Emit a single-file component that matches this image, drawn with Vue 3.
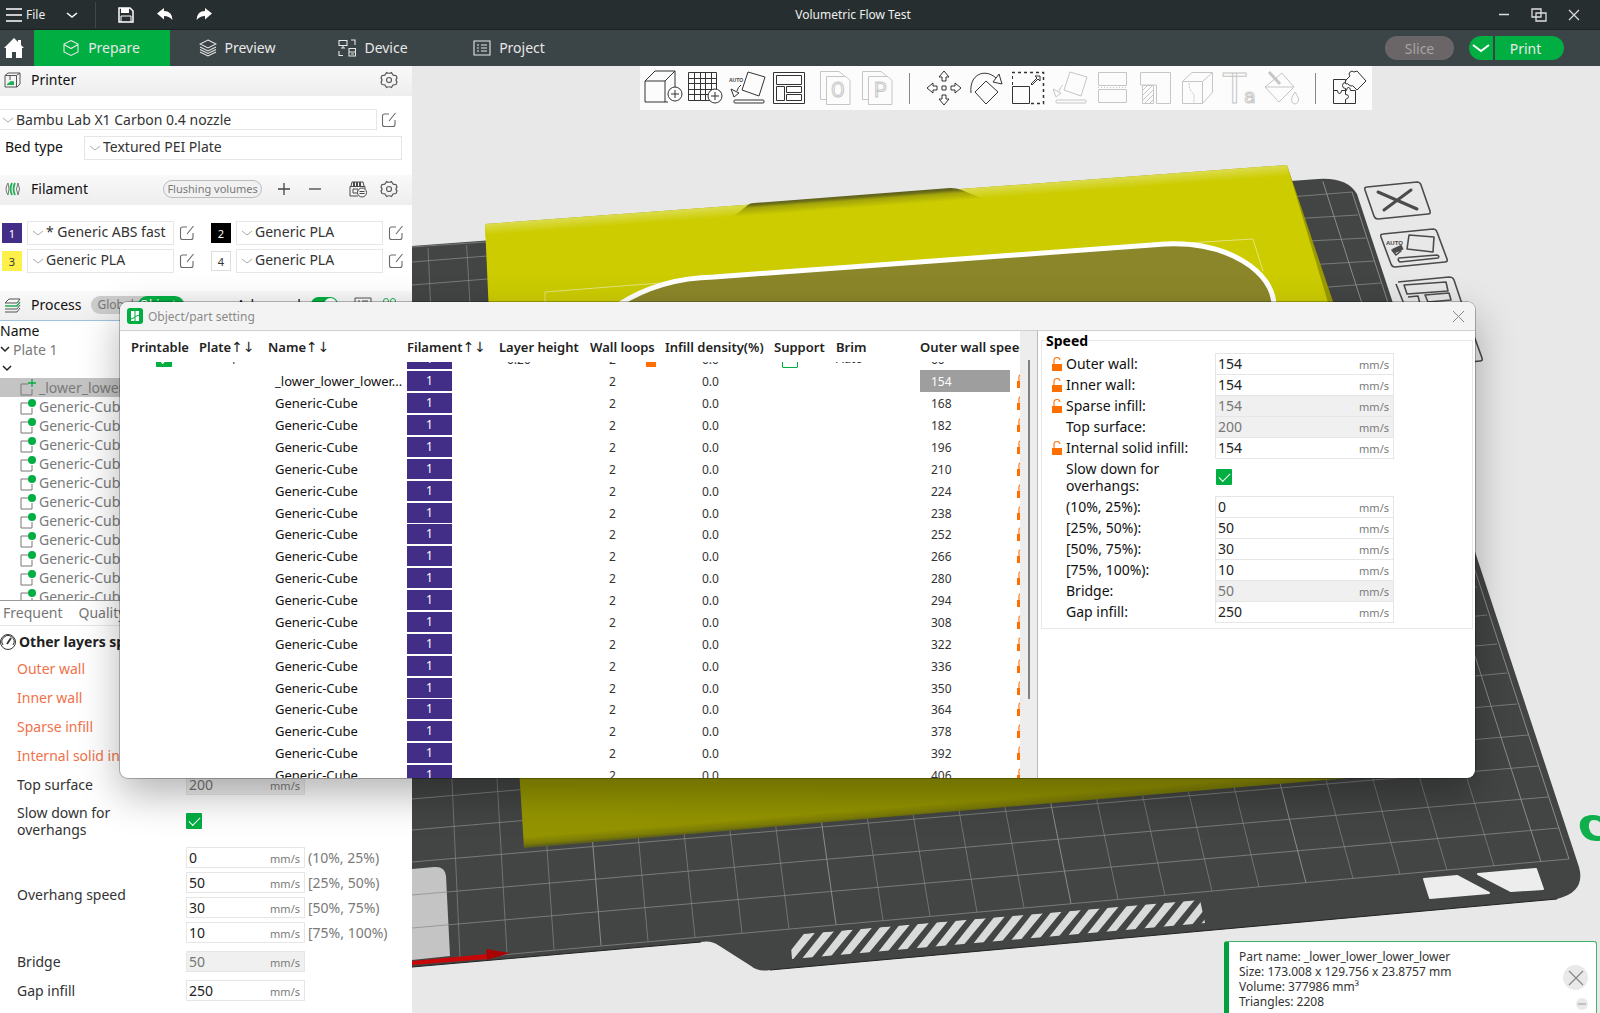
<script setup>
import { ref, onMounted } from 'vue'

const tabs = [
  { name: 'Prepare', icon: 'cube' },
  { name: 'Preview', icon: 'layers' },
  { name: 'Device', icon: 'device' },
  { name: 'Project', icon: 'project' },
]

const filaments = [
  { id: 1, name: '* Generic ABS fast', bg: '#432e87', fg: '#ffffff' },
  { id: 2, name: 'Generic PLA', bg: '#000000', fg: '#ffffff' },
  { id: 3, name: 'Generic PLA', bg: '#fdf04a', fg: '#333333' },
  { id: 4, name: 'Generic PLA', bg: '#ffffff', fg: '#333333' },
]

const treeParts = Array.from({ length: 11 }, (_, i) => i)

const changed = ['Outer wall', 'Inner wall', 'Sparse infill', 'Internal solid infill']
const overhangs = [
  { range: '(10%, 25%)', value: 0 },
  { range: '[25%, 50%)', value: 50 },
  { range: '[50%, 75%)', value: 30 },
  { range: '[75%, 100%)', value: 10 },
]

const rows = Array.from({ length: 19 }, (_, i) => ({
  name: i === 0 ? '_lower_lower_lower...' : 'Generic-Cube',
  speed: 154 + 14 * i,
  selected: i === 0,
}))

const panelTop = [
  { label: 'Outer wall:', value: 154, lock: true },
  { label: 'Inner wall:', value: 154, lock: true },
  { label: 'Sparse infill:', value: 154, lock: true, off: true },
  { label: 'Top surface:', value: 200, off: true },
  { label: 'Internal solid infill:', value: 154, lock: true },
]
const panelBottom = [
  { label: '(10%, 25%):', value: 0 },
  { label: '[25%, 50%):', value: 50 },
  { label: '[50%, 75%):', value: 30 },
  { label: '[75%, 100%):', value: 10 },
  { label: 'Bridge:', value: 50, off: true },
  { label: 'Gap infill:', value: 250 },
]

// Bed grid in scene coordinates: columns lean more the further right they are.
const columns = Array.from({ length: 24 }, (_, i) => {
  const x = 460 + 47 * i
  const y = 958 - (x - 460) * 0.089
  const lean = 0.045 + (x - 460) * 0.000255
  const end = 249 - (x - lean * (y - 210) - 412) * 0.0735
  return { x1: x, y1: y, x2: x - lean * (y - end), y2: end, major: i % 5 === 3 }
})
const lines = [
  [412, 963, 1569, 859], [412, 928, 1559, 828], [412, 895, 1548, 797], [412, 862, 1538, 766],
  [412, 830, 1528, 735], [412, 799, 1517, 704], [1400, 683, 1507, 673], [1400, 653, 1497, 644],
  [1400, 624, 1487, 615], [1400, 595, 1477, 587],
  [412, 247, 500, 241], [412, 262, 500, 255], [412, 285, 500, 278],
  [1290, 197, 1352, 192], [1290, 219, 1358, 215], [1290, 242, 1366, 238],
  [1290, 266, 1374, 261], [1290, 290, 1381, 283],
]
const stripes = Array.from({ length: 23 }, (_, k) => {
  const top = 804 + 19 * k
  const bot = 782 + 19 * k
  const ty = 935 - (top - 790) * 0.087
  const by = 961 - (bot - 790) * 0.087
  return `${top},${ty} ${top + 11},${ty - 1} ${bot + 10},${by - 1} ${bot},${by}`
})

const scroller = ref(null)
onMounted(() => { scroller.value.scrollTop = 14 })
</script>

<template>
  <svg class="defs" aria-hidden="true">
    <symbol id="chev" viewBox="0 0 12 8"><path d="M1 2l5 4 5-4" fill="none" stroke="currentColor" stroke-width="1" /></symbol>
    <symbol id="edit" viewBox="0 0 16 16"><path d="M8 2H3.500Q1.500 2 1.500 4v8.500q0 2 2 2H12q2 0 2-2V8M14.500 1L8 9" fill="none" stroke="#6b6b6b" stroke-width="1.100" /></symbol>
    <symbol id="gear" viewBox="0 0 18 18"><path d="M6.500 1.500q2.500 1.500 5 0l1.500 2.500q.500 .500 3 .500l1 2.500q-2 2 0 4l-1 2.500q-2.500 0-3 .500l-1.500 2.500q-2.500-1.500-5 0L5 14q-.500-.500-3-.500L1 11q2-2 0-4l1-2.500q2.500 0 3-.500z" fill="none" stroke="#5a5a5a" stroke-width="1.200" stroke-linejoin="round" /><circle cx="9" cy="9" r="2.500" fill="none" stroke="#5a5a5a" stroke-width="1.200" /></symbol>
    <symbol id="lock" viewBox="0 0 10 14"><path d="M2 7V4a3 3 0 0 1 6-1" fill="none" stroke="#ff7a1a" stroke-width="1.200" /><rect y="7" width="10" height="7" fill="#ff6f00" /></symbol>
    <symbol id="lay" viewBox="0 0 42 44"><path d="M21 6l17 5-6 19-17-6zM4 23l8 4-5 4zM10 25q1-4 4-6" fill="none" stroke="currentColor" /><rect x="7" y="34" width="30" height="3" rx="1" fill="none" stroke="currentColor" /></symbol>
  </svg>

  <div class="app">
    <header class="titlebar">
      <div class="menu">
        <button class="file"><svg width="16" height="14"><path d="M0 1h16M0 7h16M0 13h16" stroke="#fff" stroke-width="1.300" /></svg>File</button>
        <button aria-label="Menu" class="drop"><svg width="12" height="8"><path d="M1 2l5 4 5-4" fill="none" stroke="#fff" stroke-width="1.500" /></svg></button>
        <button aria-label="Save" class="save"><svg width="16" height="16"><path d="M1 1h11l3 3v11H1z" fill="none" stroke="#fff" stroke-width="1.500" /><path d="M3 1h8v5H3z" fill="#fff" /><path d="M3 9h10M3 15V9M13 15V9" stroke="#fff" fill="none" /></svg></button>
        <button aria-label="Undo" class="undo"><svg width="16" height="14"><path d="M0 5.500L7 0v3q8 0 8.500 9Q12 8 7 8v3.500z" fill="#fff" /></svg></button>
        <button aria-label="Redo"><svg width="16" height="14"><path d="M16 5.500L9 0v3Q1 3 .5 12 4 8 9 8v3.500z" fill="#fff" /></svg></button>
      </div>
      <div class="title">Volumetric Flow Test</div>
      <div class="winbtns">
        <button aria-label="Minimize"><svg width="12" height="14"><path d="M1 6.500h10" stroke="#ddd" stroke-width="1.500" /></svg></button>
        <button aria-label="Restore"><svg width="16" height="14"><path d="M1 1h9v8H1zM5 5h10v8H5z" fill="none" stroke="#ddd" stroke-width="1.300" /></svg></button>
        <button aria-label="Close"><svg width="12" height="12"><path d="M1 1l10 10M11 1L1 11" stroke="#ddd" stroke-width="1.200" /></svg></button>
      </div>
    </header>

    <nav class="tabbar">
      <button class="home" aria-label="Home"><svg width="20" height="20"><path d="M10 0L0 10h2v10h6v-6h4v6h6V10h2l-3-3V2h-3v2z" fill="#fff" /></svg></button>
      <button v-for="(t, i) in tabs" :key="t.name" class="tab" :class="{ active: i === 0 }">
        <svg width="18" height="18" fill="none" stroke="#e8e8e8" stroke-width="1.100">
          <path v-if="t.icon === 'cube'" d="M9 1.500l7 3.500v8l-7 3.500L2 13V5zM2 5.500l7 4 7-4" />
          <path v-else-if="t.icon === 'layers'" d="M9 1l8 4-8 4-8-4zM1 8l8 4 8-4M1 10.500l8 4 8-4M1 13l8 4 8-4" />
          <path v-else-if="t.icon === 'device'" d="M1 1.500h8v5H1zM3 9h4M5 7v2M13 1h4v5M1 12v4.500h4M11 9.500h6.500V17H11zM11 13h6M13 15h3" />
          <path v-else d="M1 2h16v14H1zM4 6h2M8 6h6M4 9h2M8 9h6M4 12h2M8 12h6" />
        </svg>
        {{ t.name }}
      </button>
      <div class="actions">
        <button class="slice" disabled>Slice</button>
        <div class="print">
          <button class="pdrop" aria-label="Print options"><svg width="18" height="10"><path d="M1 2l8 6 8-6" fill="none" stroke="#fff" stroke-width="2" /></svg></button>
          <button class="pgo">Print</button>
        </div>
      </div>
    </nav>

    <main class="body">
      <aside class="side">
        <div class="sec">
          <svg class="secicon" width="18" height="16"><path d="M1 3.500L4 1h12v11l-3 3H1zM1 3.500h11.500V15M12.500 3.500L16 1" fill="none" stroke="#555" /><path d="M3 12l4-3 3 .5V13H3z" fill="#1faf54" /><path d="M6 4v4" stroke="#555" /></svg>
          <h2>Printer</h2>
          <svg class="gear" width="18" height="18"><use href="#gear" /></svg>
        </div>
        <div class="printer">
          <div class="line">
            <div class="combo wide"><svg width="12" height="8"><use href="#chev" /></svg><select aria-label="Printer"><option>Bambu Lab X1 Carbon 0.4 nozzle</option></select></div>
            <button class="edit" aria-label="Edit printer"><svg width="16" height="16"><use href="#edit" /></svg></button>
          </div>
          <div class="line bed">
            <label for="bed">Bed type</label>
            <div class="combo tall"><svg width="12" height="8"><use href="#chev" /></svg><select id="bed"><option>Textured PEI Plate</option></select></div>
          </div>
        </div>

        <div class="sec">
          <svg class="secicon" width="18" height="16" fill="none"><path d="M4 2q-4 6 0 12M4 2q2 6 0 12" stroke="#777" /><path d="M8 2q-3 6 0 12M11 2q-3 6 0 12" stroke="#1faf54" stroke-width="1.800" /><path d="M14 2q-3 6 0 12q3-6 0-12" stroke="#777" /></svg>
          <h2>Filament</h2>
          <button class="flush">Flushing volumes</button>
          <button class="pm" aria-label="Add filament"><svg width="12" height="12"><path d="M0 6h12M6 0v12" stroke="#444" stroke-width="1.300" /></svg></button>
          <button class="pm" aria-label="Remove filament"><svg width="12" height="12"><path d="M0 6h12" stroke="#444" stroke-width="1.300" /></svg></button>
          <button class="ams" aria-label="Sync filaments"><svg width="18" height="17" fill="none" stroke="#4a4a4a"><path d="M2 5l1-4h11l1 4M1 5.500h15v3M1 5.500V15h8M4 8h5v4H4z" /><path d="M5 1v4M8 1v4M11 1v4" stroke-width="2" /><circle cx="13" cy="11.500" r="4.500" fill="#f4f4f4" /><path d="M10.500 10.500h5M10.500 12.500h5" /></svg></button>
          <svg class="gear" width="18" height="18"><use href="#gear" /></svg>
        </div>
        <div class="fils">
          <div v-for="f in filaments" :key="f.id" class="fil">
            <span class="badge" :class="{ outlined: f.id === 4 }" :style="{ background: f.bg, color: f.fg }">{{ f.id }}</span>
            <div class="combo tall"><svg width="12" height="8"><use href="#chev" /></svg><select :aria-label="'Filament ' + f.id"><option>{{ f.name }}</option></select></div>
            <button class="edit" :aria-label="'Edit filament ' + f.id"><svg width="16" height="16"><use href="#edit" /></svg></button>
          </div>
        </div>

        <div class="sec process">
          <svg class="secicon" width="18" height="16" fill="none"><path d="M5 2h11l-3 4H1z" stroke="#555" /><path d="M1 9h12l3-4" stroke="#1faf54" stroke-width="1.500" /><path d="M1 12h12l3-4M1 15h12l3-4" stroke="#555" /></svg>
          <h2>Process</h2>
          <div class="scope"><button>Global</button><button class="on">Objects</button></div>
          <label class="adv" for="advanced">Advanced</label>
          <input id="advanced" type="checkbox" class="switch" checked />
          <svg width="18" height="16" class="cmp"><path d="M1 1h16v12H1zM4 4h2M8 4h6M4 7h2M8 7h6" fill="none" stroke="#555" /></svg>
          <svg width="16" height="16" class="gg"><circle cx="4" cy="4" r="2.500" fill="none" stroke="#1faf54" /><circle cx="11" cy="4" r="2.500" fill="none" stroke="#1faf54" /></svg>
        </div>

        <div class="tree">
          <div class="node head">Name</div>
          <div class="node plate"><svg width="10" height="7"><path d="M1 1l4 4 4-4" fill="none" stroke="#222" stroke-width="1.500" /></svg>Plate 1</div>
          <div class="node obj"><svg width="10" height="7"><path d="M1 1l4 4 4-4" fill="none" stroke="#222" stroke-width="1.500" /></svg></div>
          <div class="node part sel"><svg width="16" height="18"><path d="M8 5H1v11h11v-6" fill="none" stroke="#777" /><path d="M12 0v8M8 4h8" stroke="#00ae42" stroke-width="1.300" /></svg>_lower_lower_</div>
          <div v-for="n in treeParts" :key="n" class="node part"><svg width="16" height="18"><path d="M8 5H1v11h11v-6" fill="none" stroke="#777" /><circle cx="12" cy="5" r="4" fill="#00ae42" /></svg>Generic-Cube</div>
        </div>

        <div class="ptabs"><button>Frequent</button><button>Quality</button></div>

        <div class="params">
          <h3><svg width="18" height="18" fill="none" stroke="#333"><circle cx="9" cy="9" r="7.500" /><path d="M4 12a6 6 0 1 1 10 0" /><path d="M8 11l4-6" stroke-width="1.800" /></svg>Other layers speed</h3>
          <div v-for="c in changed" :key="c" class="prow changed"><span class="plabel">{{ c }}</span></div>
          <div class="prow"><label for="top">Top surface</label><div class="num off"><input id="top" value="200" disabled /><span>mm/s</span></div></div>
          <div class="prow slow"><label for="slow">Slow down for overhangs</label><input id="slow" type="checkbox" class="check" checked /></div>
          <div class="prow over">
            <span class="plabel">Overhang speed</span>
            <div class="stack">
              <div v-for="(o, i) in overhangs" :key="i" class="oline">
                <div class="num"><input :id="'over' + i" :value="o.value" /><span>mm/s</span></div>
                <label :for="'over' + i">{{ o.range }}</label>
              </div>
            </div>
          </div>
          <div class="prow"><label for="bridge">Bridge</label><div class="num off"><input id="bridge" value="50" disabled /><span>mm/s</span></div></div>
          <div class="prow"><label for="gap">Gap infill</label><div class="num"><input id="gap" value="250" /><span>mm/s</span></div></div>
        </div>
      </aside>

      <section class="view">
        <svg class="scene" viewBox="412 66 1188 947" preserveAspectRatio="xMinYMin slice">
          <defs>
            <linearGradient id="topedge" gradientUnits="userSpaceOnUse" x1="850" y1="197" x2="864" y2="387"><stop offset="0" stop-color="#dcdc50" /><stop offset=".06" stop-color="#cccc00" /></linearGradient>
            <linearGradient id="botedge" gradientUnits="userSpaceOnUse" x1="853" y1="720" x2="861" y2="820"><stop offset="0" stop-color="#999900" /><stop offset=".9" stop-color="#949400" /><stop offset=".97" stop-color="#7c7c08" /><stop offset="1" stop-color="#606218" /></linearGradient>
            <linearGradient id="bump" gradientUnits="userSpaceOnUse" x1="850" y1="195" x2="864" y2="385"><stop offset="0" stop-color="#55581c" /><stop offset=".015" stop-color="#6d6f18" /><stop offset=".03" stop-color="#a3a40a" /><stop offset=".07" stop-color="#cccc00" /></linearGradient>
            <clipPath id="stripeclip"><path d="M790 935L1200 900l5 23L792 959z" /></clipPath>
          </defs>
          <path d="M412 246L1318 179Q1347 177 1357 194L1579 867Q1586 892 1557 899L770 970Q758 972 751 966L718 945Q711 940 701 942L412 967z" fill="#434544" />
          <path d="M701 942L412 967M1557 899L770 970" stroke="#222" fill="none" />
          <path d="M412 869l22-2q11-1 12 9l4 80-38 4z" fill="#c4c4c4" />
          <g stroke="#8a8c8b" stroke-width="1">
            <line v-for="(c, i) in columns" :key="i" :x1="c.x1" :y1="c.y1" :x2="c.x2" :y2="c.y2" :stroke-opacity="c.major ? 1 : 0.65" />
            <line v-for="(l, i) in lines" :key="'h' + i" :x1="l[0]" :y1="l[1]" :x2="l[2]" :y2="l[3]" stroke-opacity=".75" />
            <line x1="1352" y1="192" x2="1569" y2="859" />
          </g>
          <path d="M485 224L1287 165 1420 560V772L524 848z" fill="url(#botedge)" />
          <path d="M485 224L1287 165 1372 450 495 450z" fill="url(#topedge)" />
          <path d="M734 216l14-11q2-2 6-2l196-15q8 0 14 3l24 10-120 14z" fill="url(#bump)" />
          <path d="M545 305v-13l115-9M1170 244l83-5 10 32" fill="none" stroke="#e4e47c" />
          <path d="M618 305Q660 278 714 277L1165 244C1228 241 1274 272 1274 306z" fill="#8c862a" />
          <path d="M618 305Q660 278 714 277L1165 244C1228 241 1274 272 1274 306" fill="none" stroke="#fff" stroke-width="5" />
          <g fill="#d9dbda" clip-path="url(#stripeclip)"><polygon v-for="(s, i) in stripes" :key="i" :points="s" /></g>
          <g fill="#ededed" stroke="#ededed" stroke-width="2" stroke-linejoin="round"><path d="M1424 879l33-3 32 17-59 5z" /><path d="M1478 874l58-5 7 20-32 2z" /></g>
          <path d="M412 961l76-7v5l-76 6z" fill="#c80808" /><path d="M486 949l24 4-23 7z" fill="#a80404" />
          <g fill="none" stroke="#4a4c4b" stroke-width="1.600" stroke-linejoin="round">
            <path d="M1367 187l50-5q3 0 4 3l9 26q1 3-2 3l-50 5q-3 0-4-3l-9-26q-1-3 2-3z" />
            <path d="M1378 192l39 17M1411 190l-27 20" stroke-width="3" stroke-linecap="round" />
            <path d="M1383 234l50-5q3 0 4 3l10 27q1 3-2 3l-50 5q-3 0-4-3l-10-27q-1-3 2-3z" />
            <path d="M1409 235l25 2-1 15-26-3zM1392 250l9 1-5 4zM1399 258l38-3q3 1 1 3l-38 4q-3-2-1-4z" />
            <path d="M1393 250l9-4M1394 252l9-4" stroke-width="3" />
            <path d="M1398 282l51-5q4 0 5 3l10 30M1396 284l12 30M1404 285l42-3 2 9-41 3zM1425 295l24-2 2 7-23 2zM1408 297l10-1 2 8" />
            <path d="M1474 336l8 22q1 3-2 3l-10 1" />
          </g>
          <text x="1386" y="245" class="auto" font-size="6">AUTO</text>
          <path d="M1592 815q-14 1-12 13 3 13 17 13 14-1 13-13-4-13-18-13zM1594 820q7 0 9 8 1 8-5 8-7 0-9-8-1-8 5-8z" fill="#0fb04c" fill-rule="evenodd" />
        </svg>

        <div class="toolbar">
          <button aria-label="Add"><svg><path d="M25 36H2V15L12 5h20v17M2 15h20v21M22 15L32 5" /><circle cx="32" cy="28" r="7" fill="#fcfcfc" /><path d="M28 28h8M32 24v8" /></svg></button>
          <button aria-label="Add plate"><svg><path d="M3.500 6.500h28v28h-28zM9.500 6v28M15.500 6v28M20.500 6v28M26.500 6v28M3 12.500h28M3 17.500h28M3 23.500h28M3 28.500h28" /><circle cx="30" cy="30" r="7" fill="#fcfcfc" /><path d="M26 30h8M30 26v8" /></svg></button>
          <button aria-label="Auto orient"><svg><use href="#lay" /><text x="2" y="16" class="auto" font-size="5">AUTO</text></svg></button>
          <button aria-label="Arrange"><svg><path d="M4.500 6.500h31v31h-31zM7.500 9.500h25v9h-25zM7.500 20.500h8v14h-8zM17.500 20.500h15v6h-15zM17.500 28.500h15v6h-15z" /></svg></button>
          <button aria-label="Split to objects" disabled><svg><path d="M15 33.500H9.500v-28H28l6 5M15.500 10.500H35l4 4v24H15.500z" /><text x="20" y="31" font-size="20" class="glyph">O</text></svg></button>
          <button aria-label="Split to parts" disabled><svg><path d="M15 33.500H9.500v-28H28l6 5M15.500 10.500H35l4 4v24H15.500z" /><text x="21" y="31" font-size="20" class="glyph">P</text></svg></button>
          <i />
          <button aria-label="Move"><svg><path d="M19 20h4v4h-4zM21 5l5 6h-3v4h-4v-4h-3zM21 39l5-6h-3v-4h-4v4h-3zM4 22l6-5v3h4v4h-4v3zM38 22l-6-5v3h-4v4h4v3z" /></svg></button>
          <button aria-label="Rotate"><svg><path d="M21 15l12 11-12 12-11-12zM6 27C4 8 20 2 31 12M28 16l6-8 3 10z" /></svg></button>
          <button aria-label="Scale"><svg><path d="M5 6.500h31.500v31H24" stroke-dasharray="3 3" stroke-width="1.500" /><path d="M5.500 19V6" stroke-dasharray="3 3" /><path d="M5.500 20.500h17v17h-17zM24 18l6-6-2-2h5v5l-2-2-6 6z" /></svg></button>
          <button aria-label="Lay on face" disabled><svg><use href="#lay" /></svg></button>
          <button aria-label="Cut" disabled><svg><path d="M7.500 6.500h28v13h-28zM7.500 23.500h28v13h-28z" /><path d="M7 21.500h29" stroke-dasharray="1 2" /></svg></button>
          <button aria-label="Supports" disabled><svg><path d="M7.500 19V6.500h30v31h-14V19zM9.500 19.500h11v18h-11zM9 25l6-6M9 30l11-11M9 35l11-11M12 37l8-8M17 37l3-3" /></svg></button>
          <button aria-label="Seam" disabled><svg><path d="M7.500 37.500v-22L17 6.500h20.500v20l-10 11zM7.500 15.500h20v22M27.500 15.500l10-9" /><path d="M14 17q0 8 5 11v9" stroke-dasharray="2 1" /></svg></button>
          <button aria-label="Text" disabled><svg><text x="5" y="37" font-size="42" class="glyph">T</text><text x="27" y="37" font-size="21" class="glyph">a</text></svg></button>
          <button aria-label="Color painting" disabled><svg><path d="M23 7l12 14H6zM6 21l14 15 15-15M36 26q5 7 3 10-3 4-6 0-2-3 3-10z" /><path d="M10 6l11 12" stroke-width="3" /></svg></button>
          <i />
          <button aria-label="Assembly"><svg><path d="M4.500 13.500h12v3q-3 0-3 3t3 3v2h-4q0 3-2 3t-2-3h-4zM4.500 24v13.500h22v-13h-5q0-3-2-3t-2 3h-1v4q3 0 3 2t-3 3v4M20 19q-1-2-3-1-2-1 0-4l4-4q-2-2 0-4t4 0l3-1 9 10-9 9-3-3q-1-2-3-1z" /></svg></button>
        </div>

        <div class="info">
          <p>Part name: _lower_lower_lower_lower<br />Size: 173.008 x 129.756 x 23.8757 mm<br />Volume: 377986 mm³<br />Triangles: 2208</p>
          <div class="infobtns">
            <button aria-label="Dismiss" class="big"><svg width="16" height="16"><path d="M1 1l14 14M15 1L1 15" stroke="#888" stroke-width="1.300" /></svg></button>
            <button aria-label="Collapse" class="small"><svg width="8" height="2"><path d="M0 1h8" stroke="#999" /></svg></button>
          </div>
        </div>
      </section>
    </main>

    <div class="dialog" role="dialog" aria-label="Object/part setting">
      <div class="dtitle">
        <svg width="16" height="16"><rect width="16" height="16" rx="3" fill="#00ae42" /><path d="M4 3h3.500v6L4 10.500zM8.500 3H12v3.500L8.500 8zM4 11.500L7.500 10v3H4zM8.500 9L12 7.500V13H8.500z" fill="#fff" /></svg>
        <span>Object/part setting</span>
        <button aria-label="Close dialog"><svg width="11" height="11"><path d="M0 0l11 11M11 0L0 11" stroke="#888" /></svg></button>
      </div>
      <div class="dbody">
        <div ref="scroller" class="grid">
          <table>
            <colgroup>
              <col class="c-print" /><col class="c-plate" /><col class="c-name" /><col class="c-fil" /><col class="c-layer" /><col class="c-wall" /><col class="c-infill" /><col class="c-sup" /><col class="c-brim" /><col class="c-outer" />
            </colgroup>
            <thead>
              <tr><th>Printable</th><th>Plate<b>↑↓</b></th><th>Name<b>↑↓</b></th><th>Filament<b>↑↓</b></th><th>Layer height</th><th>Wall loops</th><th>Infill density(%)</th><th>Support</th><th>Brim</th><th>Outer wall speed</th></tr>
            </thead>
            <tbody>
              <tr>
                <td class="p25"><input type="checkbox" class="check" checked aria-label="Printable" /></td><td class="p31">1</td><td></td><td><span class="chip">1</span></td><td class="p7">0.20</td>
                <td class="p19"><span class="both">2<svg width="10" height="14"><use href="#lock" /></svg></span></td><td class="p37">0.0</td><td class="p7"><input type="checkbox" class="check empty" aria-label="Support" /></td><td>Auto</td><td><span class="spd">60</span></td>
              </tr>
              <tr v-for="(r, i) in rows" :key="i">
                <td></td><td></td><td class="nm">{{ r.name }}</td><td><span class="chip">1</span></td><td></td><td class="p19">2</td><td class="p37">0.0</td><td></td><td></td>
                <td><span class="both"><span class="spd" :class="{ hot: r.selected }">{{ r.speed }}</span><svg width="10" height="14"><use href="#lock" /></svg></span></td>
              </tr>
            </tbody>
          </table>
        </div>
        <div class="bar"><div class="thumb" /></div>
        <div class="panel">
          <fieldset>
            <legend>Speed</legend>
            <div v-for="(p, i) in panelTop" :key="p.label" class="srow">
              <svg width="10" height="14"><use v-if="p.lock" href="#lock" /></svg>
              <label :for="'pt' + i">{{ p.label }}</label>
              <div class="num" :class="{ off: p.off }"><input :id="'pt' + i" :value="p.value" :disabled="p.off" /><span>mm/s</span></div>
            </div>
            <div class="srow two"><svg width="10" height="14" /><label for="pslow">Slow down for overhangs:</label><input id="pslow" type="checkbox" class="check" checked /></div>
            <div v-for="(p, i) in panelBottom" :key="p.label" class="srow">
              <svg width="10" height="14" />
              <label :for="'pb' + i">{{ p.label }}</label>
              <div class="num" :class="{ off: p.off }"><input :id="'pb' + i" :value="p.value" :disabled="p.off" /><span>mm/s</span></div>
            </div>
          </fieldset>
        </div>
      </div>
    </div>
  </div>
</template>

<style>
html, body, #app { height: 100%; }
body { margin: 0; overflow: hidden; }
</style>

<style scoped>
* { box-sizing: border-box; }
button, input, select { font: inherit; color: inherit; border: 0; background: none; padding: 0; margin: 0; outline: 0; }
svg { display: block; flex: none; }
h2, h3, p { margin: 0; font-weight: 400; }
.defs { position: absolute; width: 0; height: 0; }
.app { position: relative; height: 100%; display: flex; flex-direction: column; overflow: hidden; font-family: "Noto Sans", "Open Sans", sans-serif; font-size: 14px; color: #222; background: #fff; }

.titlebar { flex: none; display: flex; align-items: center; height: 30px; background: #272e30; border-bottom: 1px solid #1b2021; color: #eee; font-size: 12px; }
.menu { width: 242px; display: flex; align-items: center; padding-left: 6px; height: 100%; }
.file { display: flex; align-items: center; gap: 4px; width: 60px; }
.drop { display: flex; align-items: center; width: 30px; height: 26px; border-right: 1px solid #40484a; }
.save { margin-left: 22px; }
.undo { margin: 0 23px; }
.title { flex: 1; text-align: center; }
.winbtns { width: 136px; display: flex; align-items: center; gap: 21px; padding-left: 34px; }

.tabbar { flex: none; display: flex; align-items: stretch; height: 36px; background: #3b4446; color: #e8e8e8; font-size: 14px; }
.home { width: 28px; margin-right: 6px; display: grid; place-items: center; }
.tab { width: 136px; display: flex; align-items: center; justify-content: center; gap: 8px; padding: 0 2px 1px 0; }
.tab.active { background: #00ae42; }
.actions { margin-left: auto; margin-right: 36px; display: flex; align-items: center; gap: 15px; }
.actions button { height: 24px; display: grid; place-items: center; }
.slice { width: 69px; border-radius: 12px; background: #6a6668; color: #a5a3a4; }
.print { display: flex; gap: 2px; }
.pdrop { width: 24px; background: #00ae42; border-radius: 12px 0 0 12px; }
.pgo { width: 69px; padding-right: 8px; background: #00ae42; border-radius: 0 12px 12px 0; }

.body { flex: 1; display: flex; min-height: 0; }
.side { width: 412px; flex: none; background: #fff; overflow: hidden; }
.sec { display: flex; align-items: center; height: 30px; padding: 0 14px 2px 4px; background: linear-gradient(#f9f9f9, #eeeeee); }
.secicon { margin-right: 9px; }
.sec h2 { font-size: 14px; line-height: 20px; color: #111; }
.gear { margin-left: auto; }
.printer { padding: 13px 0 15px; display: flex; flex-direction: column; gap: 6px; }
.line { display: flex; align-items: center; }
.combo { display: flex; align-items: center; border: 1px solid #e6e6e6; min-width: 0; flex: 1; color: #333; }
.combo svg { margin: 0 2px 0 4px; color: #aaa; }
.combo select { flex: 1; min-width: 0; appearance: none; height: 18px; line-height: 18px; }
.combo.wide { border-left: 0; flex: 0 0 377px; height: 21px; }
.combo.wide svg { margin-left: 2px; }
.combo.tall { height: 24px; }
.combo.tall select { height: 20px; padding-bottom: 2px; }
.edit { margin-left: 4px; }
.bed label { width: 84px; padding: 0 0 3px 5px; color: #111; }
.bed .combo { margin-right: 10px; }
.flush { margin-left: 75px; width: 99px; height: 18px; border: 1px solid #bcbcbc; border-radius: 9px; font-size: 11px; line-height: 16px; color: #7a7a7a; background: #f1f1f1; white-space: nowrap; }
.pm { margin-left: 17px; width: 14px; }
.flush + .pm { margin-left: 16px; }
.ams { margin-left: 26px; }
.fils { display: grid; grid-template-columns: 1fr 1fr; gap: 4px 16px; padding: 16px 8px 18px 2px; }
.fil { display: flex; align-items: center; }
.fil .edit { margin-left: 5px; }
.badge { width: 20px; height: 20px; margin-right: 5px; display: grid; place-items: center; font-size: 11px; }
.badge.outlined { border: 1px solid #ddd; }

.process { border-bottom: 1px solid #9ec3de; height: 30px; }
.scope { display: flex; margin-left: 10px; width: 94px; height: 18px; background: #ccc; border-radius: 9px; font-size: 12px; color: #777; overflow: hidden; padding-left: 6px; }
.scope .on { margin-left: 4px; width: 46px; background: #00ae42; border-radius: 9px; color: #fff; }
.adv { margin-left: 51px; color: #111; }
.switch { appearance: none; width: 27px; height: 15px; margin-left: 10px; border-radius: 8px; background: #00ae42; }
.switch::after { content: ""; display: block; width: 13px; height: 13px; margin: 1px 1px 0 13px; border-radius: 7px; background: #fff; }
.cmp { margin-left: 16px; }
.gg { margin-left: auto; }

.tree { height: 280px; overflow: hidden; border-bottom: 1px solid #999; color: #7a7a7a; }
.node { display: flex; align-items: center; height: 19px; line-height: 19px; white-space: nowrap; }
.node.head { color: #111; }
.plate svg { margin-right: 3px; }
.obj svg { margin-left: 2px; }
.part { padding-left: 20px; }
.part svg { margin-right: 3px; }
.part.sel { background: #c4c4c4; }
.ptabs { display: flex; gap: 16px; height: 25px; padding-left: 3px; color: #777; border-bottom: 1px solid #e8e8e8; }
.ptabs button { line-height: 24px; }

.params { padding-top: 3px; color: #333; }
.params h3 { display: flex; align-items: center; gap: 2px; margin-left: -1px; height: 25px; font-weight: 700; color: #222; font-size: 14px; }
.prow { display: flex; align-items: center; height: 29px; padding-left: 17px; }
.prow > label, .plabel { width: 169px; line-height: 17px; }
.changed .plabel { color: #f0714a; }
.prow.slow { height: 43px; }
.slow label { padding-right: 60px; }
.prow.over { height: 105px; }
.stack { display: flex; flex-direction: column; gap: 4px; }
.oline { display: flex; align-items: center; gap: 3px; color: #7a7a7a; }
.num { display: flex; align-items: center; width: 119px; height: 21px; border: 1px solid #e6e6e6; padding: 0 4px 0 2px; background: #fff; color: #222; }
.num input { flex: 1; min-width: 0; width: 0; height: 19px; }
.num span { font-size: 11px; color: #7a7a7a; line-height: 16px; padding-top: 3px; }
.num.off { background: #f0f0f0; color: #777; }
.check { appearance: none; display: block; flex: none; width: 16px; height: 16px; background: #00ae42; border-radius: 1px; }
.check::after { content: ""; display: block; width: 10px; height: 5px; margin: 4px 0 0 3px; border: solid #fff; border-width: 0 0 1px 1px; transform: rotate(-45deg); }
.check.empty { background: #fff; border: 1px solid #00ae42; }
.check.empty::after { display: none; }

.view { flex: 1; position: relative; min-width: 0; background: #e8e8e8; overflow: hidden; }
.scene { width: 100%; height: 100%; }
.auto { font-family: "Liberation Sans", sans-serif; font-weight: 700; fill: #444; stroke: none; }
.toolbar { position: absolute; top: 0; left: 50%; transform: translateX(-50%); display: flex; align-items: center; height: 44px; padding: 0 1px 0 3px; background: #fcfcfc; }
.toolbar button { width: 42px; height: 44px; color: #333; }
.toolbar button:disabled { color: #c6c6c6; }
.toolbar svg { width: 42px; height: 44px; fill: none; stroke: currentColor; }
.toolbar i { width: 28px; height: 31px; background: linear-gradient(#888, #888) center / 1px 100% no-repeat; }
.glyph { font-family: Roboto, sans-serif; stroke: currentColor; fill: none; }
.info { position: absolute; right: 3px; bottom: 0; width: 373px; height: 72px; display: flex; background: #fff; border: 1px solid #3fb468; border-left: 5px solid #00a03c; border-bottom: 0; border-radius: 3px 3px 0 0; padding: 7px 8px 0 10px; font-size: 12px; line-height: 15px; color: #333; white-space: nowrap; }
.infobtns { margin-left: auto; display: flex; flex-direction: column; align-items: center; gap: 8px; padding-top: 16px; }
.infobtns button { display: grid; place-items: center; border-radius: 50%; background: #e9e9e9; }
.infobtns .big { width: 25px; height: 25px; }
.infobtns .small { width: 12px; height: 12px; flex: none; align-self: flex-end; }

.dialog { position: absolute; left: 120px; right: 125px; top: 302px; height: 476px; display: flex; flex-direction: column; background: #fff; border-radius: 8px; overflow: hidden; box-shadow: 0 0 0 1px rgba(0, 0, 0, .25), 0 16px 40px rgba(0, 0, 0, .3); }
.dtitle { flex: none; display: flex; align-items: center; height: 29px; padding: 0 11px 0 7px; background: #f3f3f3; border-bottom: 1px solid #cfcfcf; font-size: 12px; color: #8a8a8a; gap: 5px; }
.dtitle button { margin-left: auto; }
.dbody { flex: 1; display: flex; min-height: 0; }
.grid { flex: 0 1 900px; overflow: hidden; padding-left: 11px; }
table { width: 899px; table-layout: fixed; border-collapse: separate; border-spacing: 0; }
.c-print { width: 68px; } .c-plate { width: 69px; } .c-name { width: 139px; } .c-fil { width: 92px; } .c-layer { width: 91px; }
.c-wall { width: 75px; } .c-infill { width: 109px; } .c-sup { width: 62px; } .c-brim { width: 84px; } .c-outer { width: 110px; }
th { position: sticky; top: 0; z-index: 1; height: 31px; padding: 0; background: #fff; text-align: left; font-size: 13px; line-height: 18px; font-weight: 600; color: #222; white-space: nowrap; }
th b { font-family: "DejaVu Sans", sans-serif; font-weight: 400; font-size: 14px; line-height: 16px; }
td { height: 22px; padding: 0; font-size: 12px; line-height: 20px; color: #333; white-space: nowrap; }
td.nm { padding-left: 7px; font-size: 13px; color: #111; }
tr:nth-child(8n) td { height: 21px; }
tr:nth-child(8n) .spd { height: 21px; line-height: 19px; }
tr:nth-child(8n) .p19, tr:nth-child(8n) .p37 { line-height: 19px; }
.chip { display: block; width: 45px; height: 20px; background: #432e87; color: #fff; text-align: center; }
.p7, .p19, .p31, .p37 { padding-top: 2px; }
.p7 { padding-left: 8px; } .p19 { padding-left: 19px; } .p25 { padding-left: 25px; } .p31 { padding-left: 31px; } .p37 { padding-left: 37px; }
.both { display: flex; align-items: center; }
.p19 .both { gap: 30px; }
.spd { display: block; width: 90px; height: 22px; line-height: 20px; padding: 2px 0 0 11px; margin-right: 7px; }
.hot { background: #9e9e9e; color: #fff; }
.bar { flex: none; width: 18px; background: #ededed; border-right: 1px solid #b8b8b8; padding: 29px 0 0 8px; }
.thumb { width: 2px; height: 339px; background: #808080; }
.panel { flex: 1; min-width: 0; padding: 0 2px 0 3px; }
fieldset { margin: 0; padding: 3px 0 6px 10px; border: 1px solid #e8e8e8; min-width: 0; color: #222; }
legend { margin-left: -6px; padding: 0; font-weight: 700; line-height: 19px; color: #000; }
.srow { display: flex; align-items: center; height: 21px; }
.srow label { width: 149px; margin-left: 4px; line-height: 17px; color: #111; }
.srow .num { width: 179px; height: 22px; }
.srow.two { height: 38px; }
.two label { padding-right: 40px; }
.two .check { margin-left: 1px; }
</style>
